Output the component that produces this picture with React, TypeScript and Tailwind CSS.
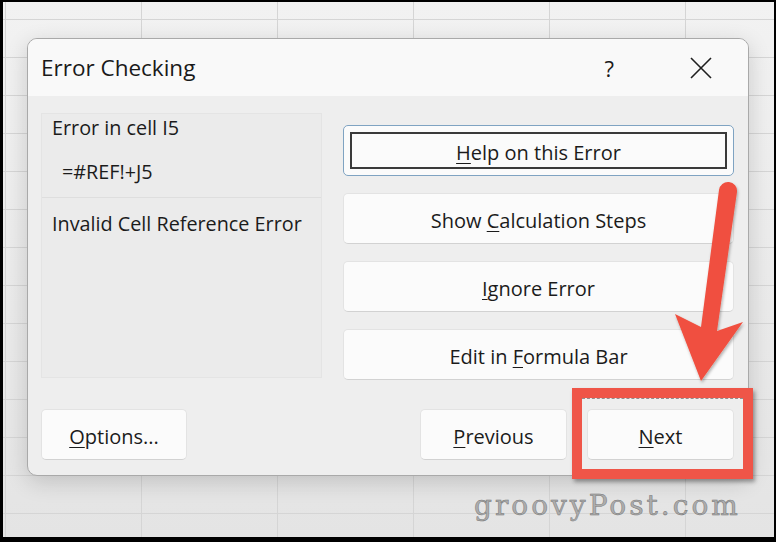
import React from "react";

const ui = "font-['Open_Sans','Noto_Sans',sans-serif]";

function Btn({
  children,
  className = "",
  focused = false,
}: {
  children: React.ReactNode;
  className?: string;
  focused?: boolean;
}) {
  if (focused) {
    return (
      <div
        className={`h-[51px] rounded-[5px] border border-[#7fa3c2] bg-[#fbfbfb] p-[6px] ${className}`}
      >
        <div className="flex h-full w-full items-center justify-center border-2 border-[#3a3a3a] pt-[4px] text-[20px] text-[#1b1b1b]">
          {children}
        </div>
      </div>
    );
  }
  return (
    <div
      className={`flex h-[51px] items-center justify-center rounded-[5px] border border-[#e3e3e3] border-b-[#d2d2d2] bg-[#fbfbfb] pt-[4px] text-[20px] text-[#1b1b1b] ${className}`}
    >
      {children}
    </div>
  );
}

function U({ children }: { children: React.ReactNode }) {
  return <span className="underline decoration-1 underline-offset-[3px]">{children}</span>;
}

export default function App() {
  return (
    <div
      className={`relative h-[542px] w-[776px] overflow-hidden border-b-[5px] border-l-[3px] border-r-[2px] border-t-2 border-black ${ui} bg-[linear-gradient(to_right,#d5d5d5_1px,transparent_1px),linear-gradient(to_bottom,#d5d5d5_1px,transparent_1px),linear-gradient(to_bottom,#f2f2f2,#e4e4e4)] bg-[size:136px_38px,136px_38px,100%_100%] bg-[position:2px_17px,2px_17px,0_0] pl-[24px] pt-[36px]`}
    >
      {/* dialog */}
      <div className="flex h-[438px] w-[722px] flex-col overflow-hidden rounded-[10px] border border-[#a9a9a9] bg-[#eeeeee] shadow-[0_6px_22px_rgba(0,0,0,0.16)]">
        <div className="flex h-[57px] shrink-0 items-center bg-[#f9f9f9] pl-[13px] pr-[36px]">
          <div className="flex-1 pt-[1px] text-[22.5px] text-[#1a1a1a]">Error Checking</div>
          <div className="mr-[76px] pt-[2px] text-[22px] text-[#1a1a1a]">?</div>
          <svg width="22" height="22" viewBox="0 0 22 22" className="mt-[1px]">
            <path d="M1 1 L21 21 M21 1 L1 21" stroke="#1f1f1f" strokeWidth="1.6" fill="none" />
          </svg>
        </div>

        <div className="flex flex-1 flex-col px-[13px] pt-[17px]">
          <div className="flex items-start gap-[21px]">
            <div className="flex h-[265px] w-[281px] flex-col border border-[#e4e4e4] bg-[#ebebeb] text-[19.8px] leading-[26px] text-[#1b1b1b]">
              <div className="h-[84px] border-b border-[#dedede] pl-[10px] pt-[1px]">
                <div>Error in cell I5</div>
                <div className="mt-[18px] pl-[10px]">=#REF!+J5</div>
              </div>
              <div className="pl-[10px] pt-[13px]">Invalid Cell Reference Error</div>
            </div>

            <div className="mt-[12px] flex w-[391px] flex-col gap-[17px]">
              <Btn focused>
                <span>
                  <U>H</U>elp on this Error
                </span>
              </Btn>
              <Btn>
                <span>
                  Show <U>C</U>alculation Steps
                </span>
              </Btn>
              <Btn>
                <span>
                  <U>I</U>gnore Error
                </span>
              </Btn>
              <Btn>
                <span>
                  Edit in <U>F</U>ormula Bar
                </span>
              </Btn>
            </div>
          </div>

          <div className="mt-[29px] flex items-center">
            <Btn className="w-[146px]">
              <span>
                <U>O</U>ptions...
              </span>
            </Btn>
            <div className="flex-1" />
            <Btn className="w-[147px]">
              <span>
                <U>P</U>revious
              </span>
            </Btn>
            <Btn className="ml-[20px] mr-[1px] w-[147px]">
              <span>
                <U>N</U>ext
              </span>
            </Btn>
          </div>
        </div>
      </div>

      {/* annotation: red box */}
      <div className="absolute left-[569px] top-[386px] h-[91px] w-[181px] border-[10px] border-[#ef5548] shadow-[2px_3px_4px_rgba(0,0,0,0.35)]">
        <div className="h-0 border-t border-dashed border-[#5a4a4a] opacity-60" />
      </div>

      {/* annotation: red arrow */}
      <svg
        className="pointer-events-none absolute left-[-3px] top-[-2px]"
        width="776"
        height="542"
        viewBox="0 0 776 542"
      >
        <defs>
          <filter id="sh" x="-20%" y="-20%" width="140%" height="140%">
            <feDropShadow dx="1" dy="2" stdDeviation="1.5" floodColor="#000" floodOpacity="0.3" />
          </filter>
        </defs>
        <g filter="url(#sh)" fill="#f0503f">
          <path d="M719 190 L701 327 L675 314 L701 381 L743 322 L717 331 L737 192 A9 9 0 0 0 719 190 Z" />
        </g>
      </svg>

      {/* watermark */}
      <div className="absolute left-[471px] top-[486px] font-['DejaVu_Serif',serif] text-[28px] leading-[36px] tracking-[3px] text-[#adadad] [-webkit-text-stroke:0.5px_#747474]">
        groovyPost.com
      </div>
    </div>
  );
}
